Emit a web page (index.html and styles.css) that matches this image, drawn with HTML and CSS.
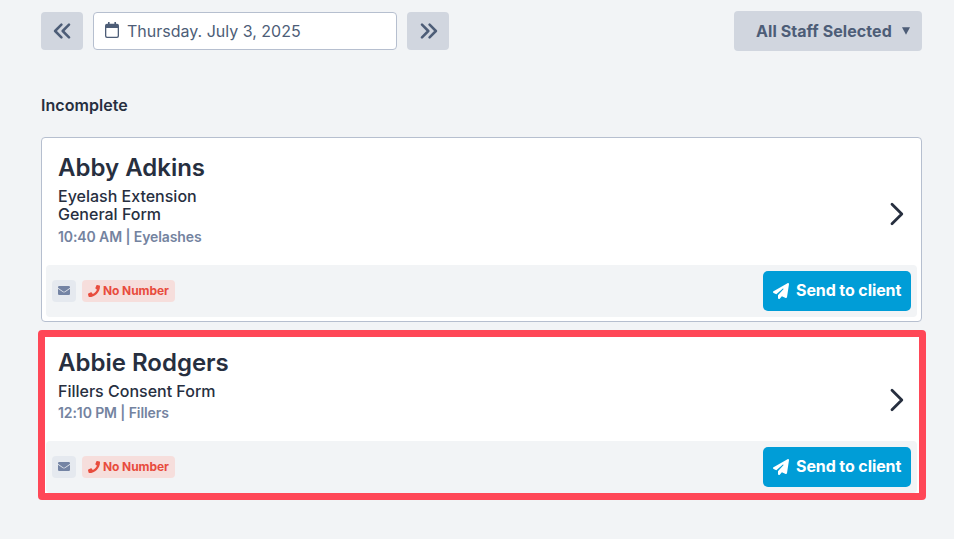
FILE: index.html
```html
<!DOCTYPE html>
<html lang="en">
<head>
<meta charset="utf-8">
<title>Forms</title>
<link rel="stylesheet" href="styles.css">
</head>
<body>
<svg class="defs" aria-hidden="true">
  <symbol id="mail" viewBox="0 0 12 10"><path fill="currentColor" d="M1.2 0h9.6Q12 0 12 1.2v.5L6.8 5.4Q6 5.9 5.2 5.4L0 1.7v-.5Q0 0 1.2 0zM0 2.7l4.7 3.4q1.3.9 2.6 0L12 2.700v5.2Q12 9 10.8 9H1.2Q0 9 0 7.900z"/></symbol>
  <symbol id="phone" viewBox="0 0 512 512"><path fill="currentColor" d="M493.4 24.6l-104-24c-11.3-2.6-22.9 3.3-27.5 13.9l-48 112c-4.2 9.8-1.4 21.3 6.9 28l60.6 49.6c-36 76.7-98.9 140.5-177.2 177.2l-49.6-60.6c-6.8-8.3-18.2-11.1-28-6.9l-112 48C3.9 366.5-2 378.1.6 389.4l24 104C27.1 504.2 36.7 512 48 512c256.1 0 464-207.5 464-464 0-11.2-7.7-20.9-18.6-23.4z"/></symbol>
  <symbol id="plane" viewBox="0 0 512 512"><path fill="currentColor" d="M498.1 5.6c10.1 7 15.4 19.1 13.5 31.2l-64 416c-1.5 9.7-7.4 18.2-16 23s-18.9 5.4-28 1.6L284 427.7l-68.5 74.1c-8.9 9.7-22.9 12.9-35.2 8.1S160 493.2 160 480V396.4c0-4 1.5-7.8 4.2-10.7L331.8 202.8c5.8-6.3 5.6-16-.4-22s-15.7-6.4-22-.7L106 360.8 17.7 316.6C7.1 311.3 .3 300.7 0 288.9s5.9-22.8 16.1-28.7l448-256c10.7-6.1 23.9-5.5 34 1.4z"/></symbol>
  <symbol id="chevron" viewBox="0 0 14 24"><path fill="none" stroke="currentColor" stroke-width="2.8" stroke-linecap="round" stroke-linejoin="round" d="M2 2.2 11.8 12 2 21.8"/></symbol>
  <symbol id="double" viewBox="0 0 18 16"><path fill="none" stroke="currentColor" stroke-width="2.5" stroke-linecap="round" stroke-linejoin="round" d="M2 1.6 8.3 8 2 14.4M9.6 1.6 15.9 8l-6.3 6.4"/></symbol>
</svg>
<header class="toolbar">
  <button class="step" aria-label="Previous day"><svg class="double flip"><use href="#double"/></svg></button>
  <div class="date">
    <svg class="calendar" viewBox="0 0 14 16"><path fill="currentColor" fill-rule="evenodd" d="M3 0h1.6v1.7h4.8V0H11v1.7h1Q14 1.7 14 3.7V14q0 2-2 2H2q-2 0-2-2V3.700q0-2 2-2h1zM1.300 6v7.700q0 1 1 1h9.400q1 0 1-1V6z"/></svg>
    <span>Thursday. July 3, 2025</span>
  </div>
  <button class="step" aria-label="Next day"><svg class="double"><use href="#double"/></svg></button>
  <button class="staff"><span>All Staff Selected</span><svg class="caret" viewBox="0 0 8 8"><path fill="currentColor" d="M0 .3h8L4 7.700z"/></svg></button>
</header>
<main>
  <h1>Incomplete</h1>
  <article class="card">
    <div class="body">
      <div>
        <h2>Abby Adkins</h2>
        <ul class="forms several"><li>Eyelash Extension</li><li>General Form</li></ul>
        <p class="meta">10:40 AM | Eyelashes</p>
      </div>
      <svg class="chevron"><use href="#chevron"/></svg>
    </div>
    <footer>
      <span class="tag"><svg class="mail"><use href="#mail"/></svg></span>
      <span class="tag alert"><svg class="phone"><use href="#phone"/></svg><span class="label">No Number</span></span>
      <button class="send"><svg class="plane"><use href="#plane"/></svg><span class="label">Send to client</span></button>
    </footer>
  </article>
  <article class="card highlighted">
    <div class="body">
      <div>
        <h2>Abbie Rodgers</h2>
        <ul class="forms"><li>Fillers Consent Form</li></ul>
        <p class="meta">12:10 PM | Fillers</p>
      </div>
      <svg class="chevron"><use href="#chevron"/></svg>
    </div>
    <footer>
      <span class="tag"><svg class="mail"><use href="#mail"/></svg></span>
      <span class="tag alert"><svg class="phone"><use href="#phone"/></svg><span class="label">No Number</span></span>
      <button class="send"><svg class="plane"><use href="#plane"/></svg><span class="label">Send to client</span></button>
    </footer>
  </article>
</main>
</body>
</html>
```
FILE: styles.css
```css
* { box-sizing: border-box; }
body {
  margin: 0;
  padding: 11px 32px 0 41px;
  min-height: 539px;
  background: #f2f4f6;
  color: #272f3f;
  font-family: Inter, "Liberation Sans", sans-serif;
}
h1, h2, p, ul { margin: 0; padding: 0; }
svg { display: block; flex: none; }
button { border: 0; padding: 0; font: inherit; color: inherit; }
.defs { display: none; }

.toolbar { display: flex; align-items: center; gap: 10px; height: 40px; color: #4d5d77; }
.step {
  display: flex; align-items: center; justify-content: center;
  width: 42px; height: 38px; border-radius: 4px; background: #d1d6df;
}
.double { width: 18px; height: 16px; margin-left: 1px; }
.flip { transform: scaleX(-1); margin: 0 1px 0 0; }
.date {
  display: flex; align-items: center; gap: 8px;
  width: 304px; height: 38px; padding-left: 11px;
  border: 1px solid #b6bfcf; border-radius: 4px; background: #fff;
  font-size: 16px;
}
.calendar { width: 14px; height: 16px; margin-bottom: 2px; }
.staff {
  display: flex; align-items: center; gap: 10px;
  width: 188px; height: 40px; margin-left: auto; padding-left: 22px;
  border-radius: 4px; background: #d1d6df;
  font-size: 16px; font-weight: 700; letter-spacing: 0.07px;
}
.caret { width: 8px; height: 8px; }

h1 { margin-top: 44px; font-size: 16px; line-height: 20px; font-weight: 600; letter-spacing: 0.05px; }
.card {
  position: relative;
  margin-top: 10px; padding: 4px;
  border: 1px solid #b6bfcf; border-radius: 4px; background: #fff;
}
h1 + .card { margin-top: 22px; }
.body {
  display: flex; align-items: center; justify-content: space-between;
  padding: 10px 13px 19px 12px;
}
h2 { font-size: 24px; line-height: 32px; font-weight: 600; }
.forms { margin-top: 3px; list-style: none; font-size: 16px; line-height: 18px; font-weight: 500; }
.several { padding-bottom: 1px; }
.meta { margin-top: 4px; font-size: 14px; line-height: 18px; font-weight: 600; letter-spacing: -0.1px; color: #74839f; }
.chevron { width: 14px; height: 24px; margin-top: 30px; }
footer {
  display: flex; align-items: center; gap: 6px;
  height: 52px; padding: 0 6px; border-radius: 4px; background: #f2f4f6;
}
.tag {
  display: flex; align-items: center; gap: 3px;
  height: 22px; padding: 0 6px; border-radius: 4px;
  background: #e5e9ef; color: #7484a4;
  font-size: 12px; font-weight: 700; letter-spacing: -0.08px;
}
.label { padding-bottom: 2px; }
.mail { width: 12px; height: 10px; }
.alert { background: #f6dedc; color: #e84c3d; }
.phone { width: 12px; height: 12px; margin-bottom: 1px; }
.send {
  display: flex; align-items: center; gap: 7px;
  width: 148px; height: 40px; margin-left: auto; padding-left: 10px;
  border-radius: 5px; background: #009dd7; color: #fff;
  font-size: 16px; font-weight: 700; letter-spacing: -0.1px; white-space: nowrap;
}
.plane { width: 16px; height: 16px; }
.highlighted::after {
  content: ""; position: absolute; inset: -3px -5px -3px -4px;
  border: 7px solid #ff4757; border-radius: 4px;
}
```
